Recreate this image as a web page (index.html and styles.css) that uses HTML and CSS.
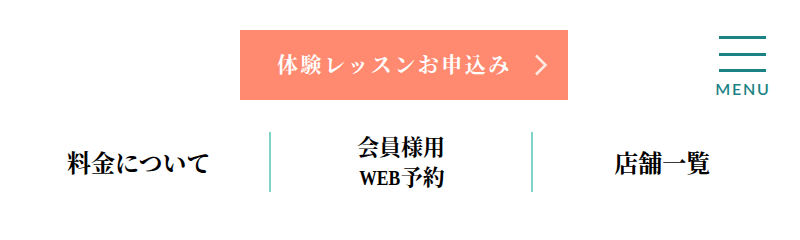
FILE: index.html
```html
<!DOCTYPE html>
<html lang="ja">
<head>
<meta charset="utf-8">
<link rel="stylesheet" href="styles.css">
</head>
<body>
<header class="header">
  <a class="trial-btn" href="#">
    <span class="trial-text">体験レッスンお申込み</span>
    <svg class="chev" width="14" height="22" viewBox="0 0 14 22"><path d="M2 1.5 L11.5 11 L2 20.5" fill="none" stroke="#fff" stroke-opacity="0.8" stroke-width="2.6"/></svg>
  </a>
  <div class="menu">
    <div class="bars"><span></span><span></span><span></span></div>
    <div class="menu-label">MENU</div>
  </div>
</header>
<nav class="nav">
  <a class="nav-item" href="#">料金について</a>
  <a class="nav-item two" href="#"><span>会員様用</span><span><span class="latin">WEB</span>予約</span></a>
  <a class="nav-item" href="#">店舗一覧</a>
</nav>
</body>
</html>
```
FILE: styles.css
```css
html, body { margin: 0; padding: 0; background: #fff; }
body {
  width: 800px;
  height: 220px;
  overflow: hidden;
  font-family: "Noto Serif CJK JP", "Liberation Serif", "Noto Sans CJK JP", serif;
}
a { text-decoration: none; color: inherit; }
.header {
  display: flex;
  align-items: flex-start;
  padding: 30px 29px 0 240px;
  height: 70px;
}
.trial-btn {
  width: 328px;
  height: 70px;
  box-sizing: border-box;
  background: #ff8a6f;
  color: #fff;
  display: flex;
  align-items: center;
  padding: 0 20px 0 37px;
}
.trial-text {
  font-size: 21px;
  font-weight: 700;
  letter-spacing: 2.5px;
  margin-top: -5px;
  flex: 1;
}
.chev { display: block; margin-top: -1px; }
.menu {
  margin-left: auto;
  width: 58px;
  display: flex;
  flex-direction: column;
  align-items: center;
  padding-top: 6px;
}
.bars {
  width: 47px;
  display: flex;
  flex-direction: column;
  gap: 13.5px;
}
.bars span {
  display: block;
  height: 3px;
  background: #1b8385;
}
.menu-label {
  margin-top: 9px;
  font-family: "Lato", "Open Sans", sans-serif;
  font-size: 16px;
  font-weight: 600;
  letter-spacing: 1.8px;
  color: #1b8385;
  line-height: 16px;
  margin-right: -2px;
}
.nav {
  display: grid;
  grid-template-columns: 1fr 1fr 1fr;
  margin: 32px 8px 0;
}
.nav-item {
  height: 60px;
  display: flex;
  flex-direction: column;
  align-items: center;
  justify-content: center;
  font-size: 24px;
  font-weight: 700;
  color: #000;
  line-height: 30px;
}
.nav-item.two { font-size: 22px; }
.nav-item + .nav-item { border-left: 2px solid #7fd4cc; }
.latin {
  font-family: "Liberation Serif", serif;
  display: inline-block;
  transform: scaleX(0.8);
  transform-origin: right center;
  margin-left: -8px;
}
```
